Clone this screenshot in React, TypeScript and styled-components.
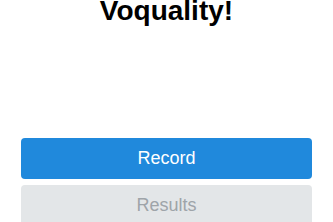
import React from "react";
import styled, { createGlobalStyle } from "styled-components";

const GlobalStyle = createGlobalStyle`
    html, body {
        margin: 0;
        padding: 0;
        background: #ffffff;
    }
    body {
        font-family: "Liberation Sans", Arial, sans-serif;
        overflow: hidden;
    }
`;

const Screen = styled.div`
    display: flex;
    flex-direction: column;
    width: 100%;
    height: 100vh;
    overflow: hidden;
`;

const Title = styled.h1`
    margin: 0;
    font-size: 28px;
    line-height: 22px;
    font-weight: 700;
    color: #000000;
    text-align: center;
`;

const Actions = styled.div`
    display: flex;
    flex-direction: column;
    gap: 6px;
    padding: 0 21px;
    margin-top: 116px;
`;

const ActionButton = styled.button<{ disabled?: boolean }>`
    height: 41px;
    border: none;
    border-radius: 4px;
    font-family: "Liberation Sans", Arial, sans-serif;
    font-size: 18px;
    background: ${({ disabled }) => (disabled ? "#e3e6e8" : "#2089dc")};
    color: ${({ disabled }) => (disabled ? "#9ea4a9" : "#ffffff")};
    cursor: ${({ disabled }) => (disabled ? "default" : "pointer")};
`;

export default function App() {
    return (
        <>
            <GlobalStyle />
            <Screen>
                <Title>Voquality!</Title>
                <Actions>
                    <ActionButton>Record</ActionButton>
                    <ActionButton disabled>Results</ActionButton>
                </Actions>
            </Screen>
        </>
    );
}
